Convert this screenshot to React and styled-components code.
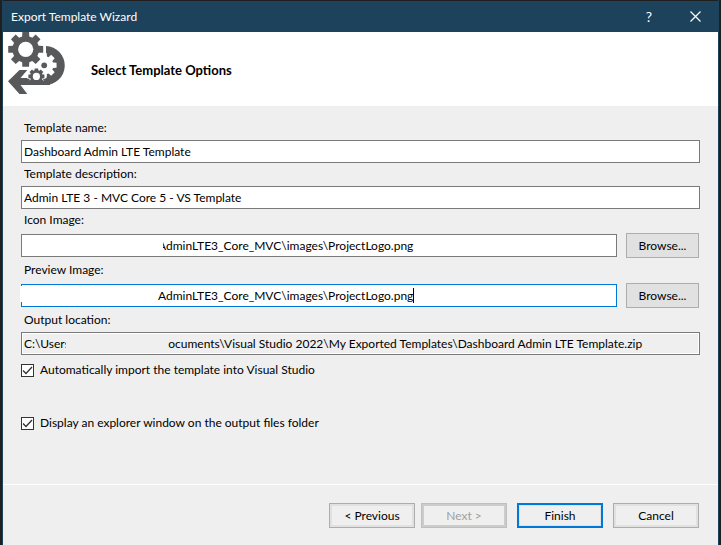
import React, { useState } from "react";
import styled, { createGlobalStyle } from "styled-components";

const GlobalStyle = createGlobalStyle`
  *, *::before, *::after { box-sizing: border-box; }
  body {
    margin: 0;
    background: #1f1f1f;
    color: #000;
    font: 12px/16px Lato, sans-serif;
  }
  button, input { font: inherit; color: inherit; margin: 0; }
`;

const Dialog = styled.main`
  display: flex;
  flex-direction: column;
  min-height: 100vh;
  margin: 0 2px;
  border: solid #1c425c;
  border-width: 0 1px;
  background: #efefef;
`;

const TitleBar = styled.header`
  display: flex;
  align-items: center;
  height: 32px;
  padding: 0 0 0 8px;
  border-top: 1px solid #1f1f1f;
  background: #1c425c;
  color: #fff;
`;

const WindowTitle = styled.h1`
  flex: 1;
  margin: 0;
  font: inherit;
`;

const TitleButton = styled.button`
  display: grid;
  place-items: center;
  width: 46px;
  height: 31px;
  padding: 0;
  border: 0;
  background: transparent;
  font-size: 14px;
`;

const Banner = styled.section`
  display: flex;
  align-items: center;
  gap: 26px;
  height: 74px;
  padding: 0 5px;
  background: #fff;
  svg { align-self: flex-start; flex: none; }
`;

const Heading = styled.h2`
  margin: 0;
  padding-top: 2px;
  font-size: 13px;
  line-height: 16px;
  font-weight: 700;
`;

const Form = styled.form`
  display: flex;
  flex: 1;
  flex-direction: column;
`;

const Fields = styled.div`
  display: flex;
  flex: 1;
  flex-direction: column;
  padding: 14px 18px 0;
`;

const Label = styled.label`
  display: block;
  height: 20px;
  padding-left: 3px;
`;

const Row = styled.div`
  display: flex;
  align-items: center;
  gap: 9px;
  padding: ${(p) => (p.$withButton ? "1px 1px 4px 0" : "0 0 3px")};
`;

const Field = styled.div`
  position: relative;
  flex: 1;
  height: 23px;
`;

const TextInput = styled.input`
  display: block;
  width: 100%;
  height: 23px;
  padding: 0 2px 0 ${(p) => (p.$indent ? "136px" : "2px")};
  border: 1px solid ${(p) => (p.$active ? "#0078d7" : "#7a7a7a")};
  background: #fff;
  outline: 0;
  &:read-only {
    background: #efefef;
    box-shadow: inset 0 0 0 1px #fff;
  }
`;

/* Blank strip that hides the private part of a path. */
const Redaction = styled.span`
  position: absolute;
  top: 2px;
  bottom: ${(p) => (p.$edge ? "5px" : "2px")};
  left: ${(p) => p.$from}px;
  width: ${(p) => p.$size}px;
  background: ${(p) => (p.$muted ? "#efefef" : "#fff")};
`;

const Caret = styled.span`
  position: absolute;
  top: 4px;
  left: 392px;
  width: 1px;
  height: 15px;
  background: #000;
`;

const BrowseButton = styled.button`
  width: 73px;
  height: 25px;
  padding: 0;
  border: 1px solid #adadad;
  background: #e1e1e1;
`;

const CheckRow = styled.label`
  display: flex;
  align-items: center;
  gap: 6px;
  height: 16px;
  margin-top: ${(p) => (p.$spaced ? "37px" : "4px")};
`;

const CheckBox = styled.input`
  appearance: none;
  width: 13px;
  height: 13px;
  border: 1px solid #333;
  background: #fff;
  &:checked {
    background: #fff url("data:image/svg+xml,%3Csvg xmlns='http://www.w3.org/2000/svg' viewBox='0 0 11 11'%3E%3Cpath d='M1 5.5 4 8.5 10 2' fill='none' stroke='%23333' stroke-width='1.3'/%3E%3C/svg%3E");
  }
`;

const Footer = styled.footer`
  display: flex;
  justify-content: flex-end;
  gap: 10px;
  height: 61px;
  padding: 18px 19px 0;
  border-top: 1px solid #fff;
`;

const ButtonPair = styled.div`
  display: flex;
  gap: 6px;
`;

const WizardButton = styled.button`
  width: 86px;
  height: 25px;
  padding: 0;
  border: ${(p) => (p.$primary ? "2px solid #0078d7" : "1px solid #adadad")};
  background: #efefef;
  box-shadow: inset 0 0 0 ${(p) => (p.$primary ? "1px" : "2px")} #e1e1e1;
  &:disabled {
    border-color: #bfbfbf;
    box-shadow: inset 0 0 0 2px #ccc;
    color: #a0a0a0;
  }
`;

function gearPath(cx, cy, outer, inner, count, root, tip) {
  const points = [];
  for (let i = 0; i < count; i += 1) {
    const mid = (i * 2 * Math.PI) / count - Math.PI / 2;
    [[inner, -root], [outer, -tip], [outer, tip], [inner, root]].forEach(([r, a]) => {
      points.push(`${(cx + r * Math.cos(mid + a)).toFixed(2)} ${(cy + r * Math.sin(mid + a)).toFixed(2)}`);
    });
  }
  return `M${points.join("L")}Z`;
}

function GearsIcon() {
  return (
    <svg width="57" height="62" viewBox="0 0 57 62" aria-hidden="true">
      <g fill="#58595b">
        <path d="M38 14A19.5 19.5 0 0 1 36.5 53H18V46H38Z" />
        <path d="M0 49.3 11.5 38H19.3L12.5 46H26V53H12.5L19.3 62H11.5Z" />
      </g>
      <path d={gearPath(36.2, 33.3, 12.6, 9.2, 8, 0.3, 0.2)} fill="#fff" />
      <circle cx="36.2" cy="33.3" r="2.9" fill="#58595b" />
      <path d={gearPath(28.4, 44.4, 9.4, 7.4, 8, 0.34, 0.28)} fill="#fff" />
      <path d="M13 46.5H19L22 48.5H42V53H13Z" fill="#58595b" />
      <path d={gearPath(28.4, 44.4, 8.2, 6.4, 8, 0.3, 0.22)} fill="#58595b" />
      <circle cx="28.4" cy="44.4" r="3.6" fill="#fff" />
      <path d={gearPath(17.7, 17.3, 17.8, 13.4, 8, 0.27, 0.19)} fill="#58595b" />
      <circle cx="17.7" cy="17.3" r="7.6" fill="#fff" />
    </svg>
  );
}

const IMAGE_PATH = "AdminLTE3_Core_MVC\\images\\ProjectLogo.png";
const OUTPUT_PATH =
  "C:\\Users" + "\u00a0".repeat(32) + "ocuments\\Visual Studio 2022\\My Exported Templates\\Dashboard Admin LTE Template.zip";

export default function App() {
  const [autoImport, setAutoImport] = useState(true);
  const [showFolder, setShowFolder] = useState(true);

  return (
    <>
      <GlobalStyle />
      <Dialog>
        <TitleBar>
          <WindowTitle>Export Template Wizard</WindowTitle>
          <TitleButton type="button" aria-label="Help">?</TitleButton>
          <TitleButton type="button" aria-label="Close">
            <svg width="11" height="11" viewBox="0 0 11 11" aria-hidden="true">
              <path d="M.5 .5 10.5 10.5M10.5 .5 .5 10.5" stroke="#fff" strokeWidth="1.2" />
            </svg>
          </TitleButton>
        </TitleBar>
        <Banner>
          <GearsIcon />
          <Heading>Select Template Options</Heading>
        </Banner>
        <Form onSubmit={(e) => e.preventDefault()}>
          <Fields>
            <Label htmlFor="name">Template name:</Label>
            <Row>
              <Field>
                <TextInput id="name" defaultValue="Dashboard Admin LTE Template" />
              </Field>
            </Row>
            <Label htmlFor="description">Template description:</Label>
            <Row>
              <Field>
                <TextInput id="description" defaultValue="Admin LTE 3 - MVC Core 5 - VS Template" />
              </Field>
            </Row>
            <Label htmlFor="icon">Icon Image:</Label>
            <Row $withButton>
              <Field>
                <TextInput id="icon" $indent defaultValue={IMAGE_PATH} />
                <Redaction $from={2} $size={140} />
              </Field>
              <BrowseButton type="button">Browse...</BrowseButton>
            </Row>
            <Label htmlFor="preview">Preview Image:</Label>
            <Row $withButton>
              <Field>
                <TextInput id="preview" $indent $active defaultValue={IMAGE_PATH} />
                <Redaction $edge $from={-1} $size={137} />
                <Caret />
              </Field>
              <BrowseButton type="button">Browse...</BrowseButton>
            </Row>
            <Label htmlFor="output">Output location:</Label>
            <Row>
              <Field>
                <TextInput id="output" readOnly value={OUTPUT_PATH} />
                <Redaction $muted $from={45} $size={101} />
              </Field>
            </Row>
            <CheckRow>
              <CheckBox type="checkbox" checked={autoImport} onChange={(e) => setAutoImport(e.target.checked)} />
              Automatically import the template into Visual Studio
            </CheckRow>
            <CheckRow $spaced>
              <CheckBox type="checkbox" checked={showFolder} onChange={(e) => setShowFolder(e.target.checked)} />
              Display an explorer window on the output files folder
            </CheckRow>
          </Fields>
          <Footer>
            <ButtonPair>
              <WizardButton type="button">&lt; Previous</WizardButton>
              <WizardButton type="button" disabled>Next &gt;</WizardButton>
            </ButtonPair>
            <WizardButton type="submit" $primary>Finish</WizardButton>
            <WizardButton type="button">Cancel</WizardButton>
          </Footer>
        </Form>
      </Dialog>
    </>
  );
}
